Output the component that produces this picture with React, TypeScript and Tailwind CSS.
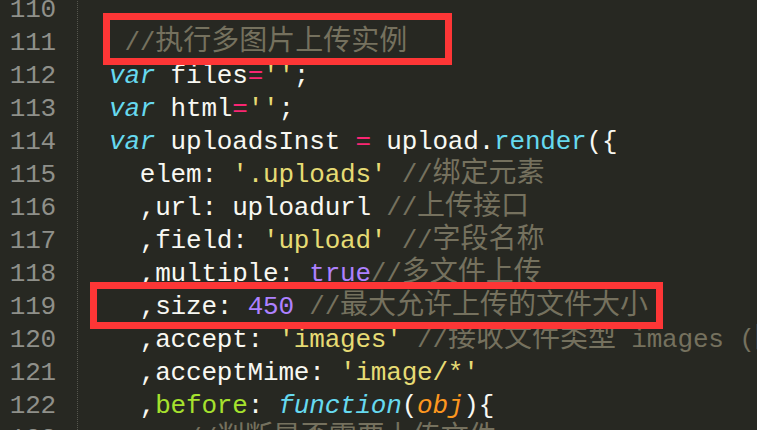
import React from "react";

type Tok = [string, string];

const P = "text-[#f8f8f2]";
const KW = "text-[#66d9ef] italic";
const OP = "text-[#f92672]";
const STR = "text-[#e6db74]";
const CM = "text-[#75715e]";
const NUM = "text-[#ae81ff]";
const FN = "text-[#66d9ef]";
const GR = "text-[#a6e22e]";
const PARAM = "text-[#fd971f] italic";

const lines: { n: number; toks: Tok[] }[] = [
  { n: 110, toks: [] },
  { n: 111, toks: [[" //执行多图片上传实例", CM]] },
  {
    n: 112,
    toks: [
      ["var", KW],
      [" files", P],
      ["=", OP],
      ["''", STR],
      [";", P],
    ],
  },
  {
    n: 113,
    toks: [
      ["var", KW],
      [" html", P],
      ["=", OP],
      ["''", STR],
      [";", P],
    ],
  },
  {
    n: 114,
    toks: [
      ["var", KW],
      [" uploadsInst ", P],
      ["=", OP],
      [" upload.", P],
      ["render", FN],
      ["({", P],
    ],
  },
  {
    n: 115,
    toks: [
      ["  elem: ", P],
      ["'.uploads'", STR],
      [" //绑定元素", CM],
    ],
  },
  {
    n: 116,
    toks: [
      ["  ,url: uploadurl ", P],
      ["//上传接口", CM],
    ],
  },
  {
    n: 117,
    toks: [
      ["  ,field: ", P],
      ["'upload'", STR],
      [" //字段名称", CM],
    ],
  },
  {
    n: 118,
    toks: [
      ["  ,multiple: ", P],
      ["true", NUM],
      ["//多文件上传", CM],
    ],
  },
  {
    n: 119,
    toks: [
      ["  ,size: ", P],
      ["450", NUM],
      [" //最大允许上传的文件大小", CM],
    ],
  },
  {
    n: 120,
    toks: [
      ["  ,accept: ", P],
      ["'images'", STR],
      [" //接收文件类型 images (图片)", CM],
    ],
  },
  {
    n: 121,
    toks: [
      ["  ,acceptMime: ", P],
      ["'image/*'", STR],
    ],
  },
  {
    n: 122,
    toks: [
      ["  ,", P],
      ["before", GR],
      [": ", P],
      ["function", KW],
      ["(", P],
      ["obj", PARAM],
      ["){", P],
    ],
  },
  { n: 123, toks: [["     //判断是否需要上传文件", CM]] },
];

const CJK = /([\u3000-\u9fff\uff00-\uffef]+)/;

function renderText(text: string) {
  const parts = text.split(CJK);
  return parts.map((p, i) =>
    i % 2 === 1 ? (
      <span
        key={i}
        className="font-['Noto_Sans_CJK_SC',sans-serif] text-[28px] leading-[0px] tracking-normal"
      >
        {p}
      </span>
    ) : (
      <React.Fragment key={i}>{p}</React.Fragment>
    )
  );
}

export default function App() {
  return (
    <div className="relative h-[430px] w-[757px] overflow-hidden bg-[#272822] font-['Liberation_Mono','Noto_Sans_CJK_SC',monospace] text-[26px] tracking-[-0.2px]">
      <div className="mt-[-6px] flex">
        <div className="w-[78px] shrink-0 border-r border-dotted border-[#55564e] pr-[21px] text-right text-[#8f908a]">
          {lines.map((l) => (
            <div key={l.n} className="h-[33px] leading-[33px]">
              {l.n}
            </div>
          ))}
          <div className="h-[40px]" />
        </div>
        <div className="min-w-0 flex-1 overflow-hidden pl-[31px]">
          {lines.map((l) => (
            <div key={l.n} className="h-[33px] whitespace-pre leading-[33px]">
              {l.toks.map(([t, c], i) => (
                <span key={i} className={c}>
                  {renderText(t)}
                </span>
              ))}
            </div>
          ))}
        </div>
      </div>
      <div className="pointer-events-none absolute left-[103px] top-[13px] h-[52px] w-[349px] border-[7px] border-[#fd3636]" />
      <div className="pointer-events-none absolute left-[90px] top-[282px] h-[47px] w-[573px] border-[7px] border-[#fd3636]" />
    </div>
  );
}
